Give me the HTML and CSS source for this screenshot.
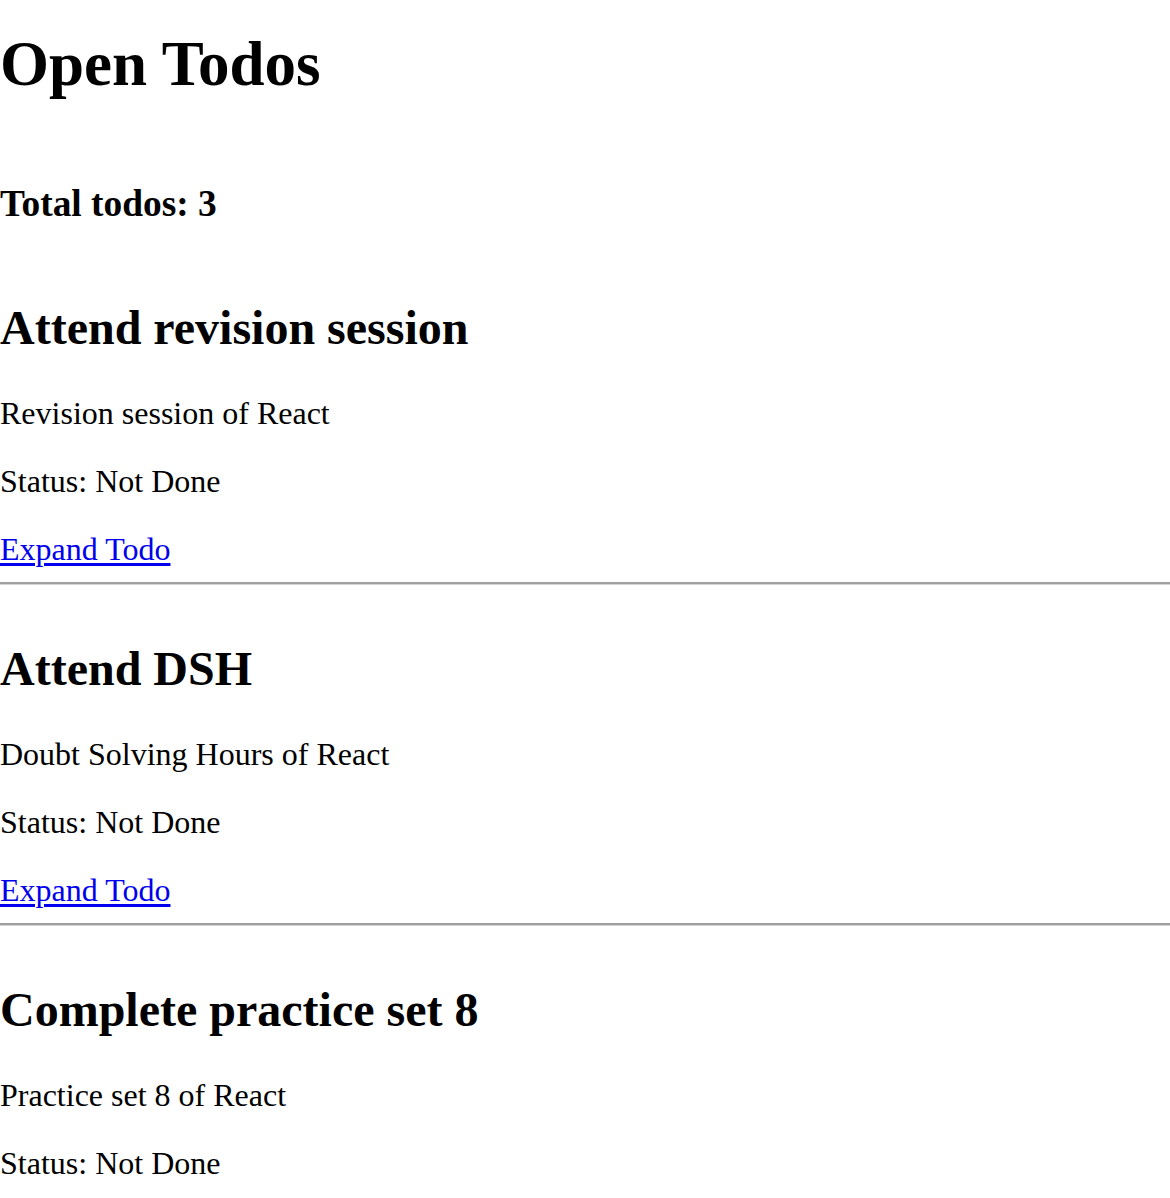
FILE: index.html
```html
<!DOCTYPE html>
<html>
<head>
<meta charset="utf-8">
<title>Open Todos</title>
<link rel="stylesheet" href="styles.css">
</head>
<body>
<div class="page">
  <h1 class="title">Open Todos</h1>
  <h3 class="total">Total todos: 3</h3>
  <div class="todo">
    <h2 class="todo-title">Attend revision session</h2>
    <p class="line">Revision session of React</p>
    <p class="line">Status: Not Done</p>
    <p class="line"><a class="link" href="#">Expand Todo</a></p>
    <hr class="rule">
  </div>
  <div class="todo">
    <h2 class="todo-title">Attend DSH</h2>
    <p class="line">Doubt Solving Hours of React</p>
    <p class="line">Status: Not Done</p>
    <p class="line"><a class="link" href="#">Expand Todo</a></p>
    <hr class="rule">
  </div>
  <div class="todo">
    <h2 class="todo-title">Complete practice set 8</h2>
    <p class="line">Practice set 8 of React</p>
    <p class="line">Status: Not Done</p>
    <p class="line"><a class="link" href="#">Expand Todo</a></p>
    <hr class="rule">
  </div>
</div>
</body>
</html>
```
FILE: styles.css
```css
html, body {
  margin: 0;
  padding: 0;
  background: #ffffff;
}
body {
  font-family: "Liberation Serif", "Times New Roman", serif;
  color: #000000;
}
.page {
  padding-top: 28px;
}
.title {
  font-size: 63px;
  line-height: 73px;
  font-weight: bold;
  margin: 0 0 81px 0;
}
.total {
  font-size: 37.4px;
  line-height: 43px;
  font-weight: bold;
  margin: 0 0 75px 0;
}
.todo {
  display: flow-root;
}
.todo-title {
  font-size: 48px;
  line-height: 55px;
  font-weight: bold;
  margin: 0 0 40px 0;
}
.line {
  font-size: 32px;
  line-height: 36px;
  margin: 0 0 32px 0;
}
.line:nth-of-type(3) {
  margin-bottom: 15px;
}
.link {
  color: #0000ee;
  text-decoration: underline;
  text-underline-offset: 3px;
}
.rule {
  margin: 0 0 56px 0;
  height: 0;
  border: 0;
  border-top: 2px solid #a0a0a0;
  border-bottom: 1px solid #d4d4d4;
}
```
